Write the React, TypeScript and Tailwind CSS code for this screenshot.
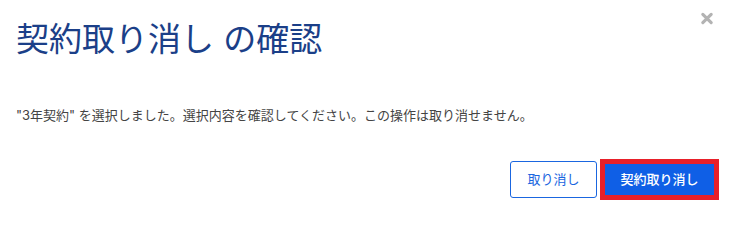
import React from "react";

const font = {
  fontFamily: '"Inter", "Noto Sans CJK JP", sans-serif',
};

const CloseIcon = () => (
  <svg viewBox="0 0 14 14" className="w-[14px] h-[13px]" aria-hidden="true">
    <path d="M2.5 2.5 L11.5 11.5 M11.5 2.5 L2.5 11.5" stroke="#b3b3b3" strokeWidth="3.4" strokeLinecap="round" />
  </svg>
);

const App = () => {
  return (
    <div className="relative w-[729px] h-[211px] bg-white" style={font}>
      {/* Close */}
      <button className="absolute top-[12px] left-[700px] p-0 leading-none">
        <CloseIcon />
      </button>

      <div className="pl-[16px] pt-[19px]">
        <h1 className="text-[33px] leading-[40px] font-normal text-[#1b3f88]">
          契約取り消し の確認
        </h1>

        <p className="mt-[46px] text-[13px] leading-[20px] text-[#444444]">
          "3年契約" を選択しました。選択内容を確認してください。この操作は取り消せません。
        </p>
      </div>

      {/* Actions */}
      <div className="flex justify-end items-center gap-[3px] pr-[10px] mt-[34px]">
        <button className="w-[87px] h-[37px] rounded-[3px] border border-[#1a66e0] text-[#1a66e0] text-[13px] bg-white">
          取り消し
        </button>
        <button className="w-[119px] h-[41px] border-[5px] border-[#e8202a] bg-[#0f5fe6] text-white text-[13px] font-medium">
          契約取り消し
        </button>
      </div>
    </div>
  );
};

export default App;
